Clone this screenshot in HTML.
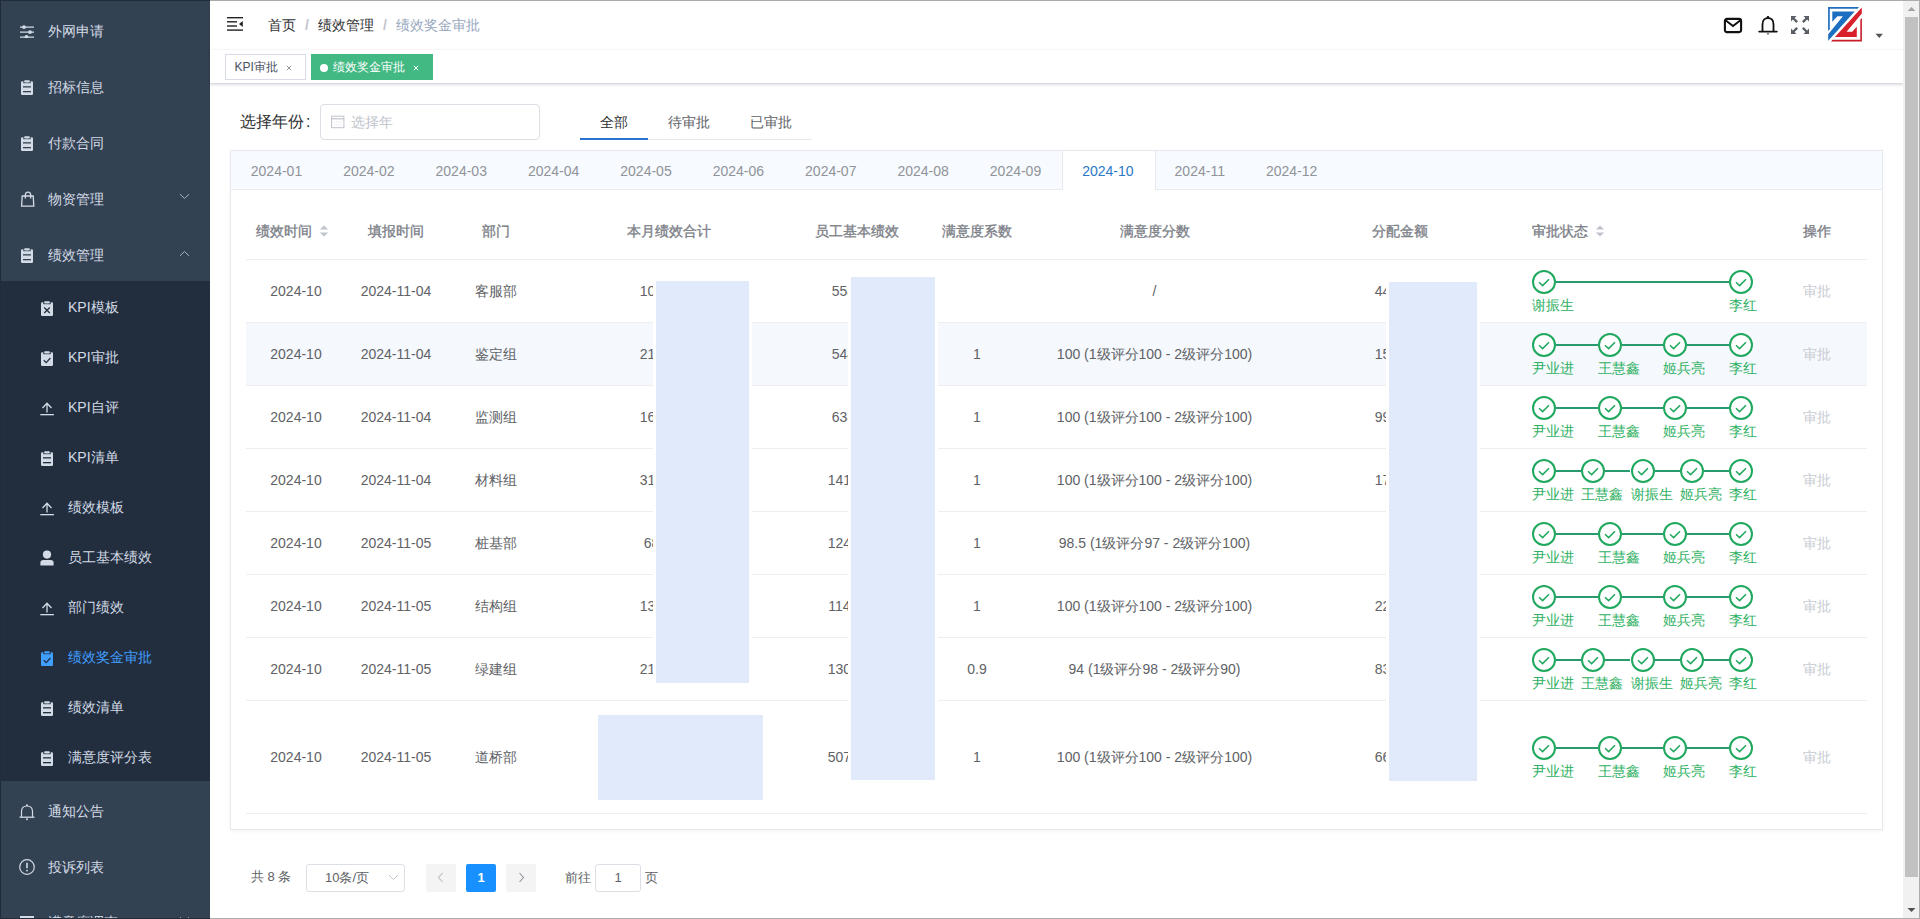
<!DOCTYPE html><html><head><meta charset="utf-8"><style>
*{margin:0;padding:0;box-sizing:border-box}
html,body{width:1920px;height:919px;overflow:hidden;background:#fff;font-family:"Liberation Sans", sans-serif;}
.a{position:absolute}
.t{position:absolute;white-space:nowrap;line-height:20px;}
#side{left:1px;top:1px;width:209px;height:917px;background:#334253;overflow:hidden}
.mi{position:absolute;left:0;width:209px;color:#d3dbe6;font-size:14px;}
.mi .tx{position:absolute;left:47px;line-height:20px;white-space:nowrap}
.smi .tx{left:67px}
.ico{position:absolute}
.row{position:absolute;left:246px;width:1621px;height:63px;border-bottom:1px solid #ebeef5}
.c{position:absolute;font-size:14px;color:#606266;line-height:20px;white-space:nowrap;text-align:center}
.hd{position:absolute;font-size:14px;color:#7d8188;font-weight:normal;-webkit-text-stroke:0.35px #7d8188;line-height:20px;white-space:nowrap}
.red{position:absolute;background:#e0eafb;box-shadow:0 0 0 3px #fff}
.mt{position:absolute;top:152px;height:38px;line-height:38px;font-size:14px;color:#909399;padding:0 20px;white-space:nowrap}
</style></head><body>
<div class="a" style="left:0;top:0;width:210px;height:919px;background:#334253"></div>
<div id="side" class="a">
<div class="a" style="left:0;top:280px;width:209px;height:500px;background:#222e3e"></div>
<div class="mi" style="top:0px;height:56px;"><svg class="ico" style="left:18px;top:23px" width="16" height="14" viewBox="0 0 16 14"><path d="M1 3.1 H15 M1 8.1 H15 M1 13.1 H15" stroke="#d3dbe6" stroke-width="1.3"/><circle cx="5" cy="3.1" r="1.9" fill="#d3dbe6"/><circle cx="11" cy="8.1" r="1.9" fill="#d3dbe6"/><circle cx="7.5" cy="13" r="1.9" fill="#d3dbe6"/></svg><div class="tx" style="top:20px">外网申请</div></div>
<div class="mi" style="top:56px;height:56px;"><svg class="ico" style="left:19px;top:23px" width="14" height="16" viewBox="0 0 14 16"><rect x="1" y="1.2" width="12" height="13.8" rx="1.2" fill="#d3dbe6"/><rect x="3.3" y="0" width="7.4" height="3.2" fill="#334253"/><rect x="4.2" y="0.2" width="5.6" height="2.4" rx="0.8" fill="#d3dbe6"/><rect x="3" y="6.2" width="8" height="1.3" fill="#334253"/><rect x="3" y="11" width="8" height="1.3" fill="#334253"/></svg><div class="tx" style="top:20px">招标信息</div></div>
<div class="mi" style="top:112px;height:56px;"><svg class="ico" style="left:19px;top:23px" width="14" height="16" viewBox="0 0 14 16"><rect x="1" y="1.2" width="12" height="13.8" rx="1.2" fill="#d3dbe6"/><rect x="3.3" y="0" width="7.4" height="3.2" fill="#334253"/><rect x="4.2" y="0.2" width="5.6" height="2.4" rx="0.8" fill="#d3dbe6"/><rect x="3" y="6.2" width="8" height="1.3" fill="#334253"/><rect x="3" y="11" width="8" height="1.3" fill="#334253"/></svg><div class="tx" style="top:20px">付款合同</div></div>
<div class="mi" style="top:168px;height:56px;"><svg class="ico" style="left:19px;top:22px" width="16" height="18" viewBox="0 0 16 18"><path d="M5.3 7.5 V4.2 Q5.3 1.2 8 1.2 Q10.7 1.2 10.7 4.2 V7.5" stroke="#d3dbe6" stroke-width="1.3" fill="none"/><path d="M2.2 5 H13.2 L13.8 15.2 H1.6 Z" stroke="#d3dbe6" stroke-width="1.3" fill="none"/></svg><div class="tx" style="top:20px">物资管理</div><svg class="ico" style="left:178px;top:24px" width="11" height="7" viewBox="0 0 11 7"><path d="M1 1.2 L5.5 5.5 L10 1.2" stroke="#a8b3c2" stroke-width="1" fill="none"/></svg></div>
<div class="mi" style="top:224px;height:56px;"><svg class="ico" style="left:19px;top:23px" width="14" height="16" viewBox="0 0 14 16"><rect x="1" y="1.2" width="12" height="13.8" rx="1.2" fill="#d3dbe6"/><rect x="3.3" y="0" width="7.4" height="3.2" fill="#334253"/><rect x="4.2" y="0.2" width="5.6" height="2.4" rx="0.8" fill="#d3dbe6"/><rect x="3" y="6.2" width="8" height="1.3" fill="#334253"/><rect x="3" y="11" width="8" height="1.3" fill="#334253"/></svg><div class="tx" style="top:20px">绩效管理</div><svg class="ico" style="left:178px;top:25px" width="11" height="7" viewBox="0 0 11 7"><path d="M1 5.8 L5.5 1.5 L10 5.8" stroke="#a8b3c2" stroke-width="1" fill="none"/></svg></div>
<div class="mi smi" style="top:280px;height:50px;color:#d3dbe6"><div class="tx" style="top:16px;left:67px">KPI模板</div><svg class="ico" style="left:39px;top:20px" width="14" height="16" viewBox="0 0 14 16"><rect x="1" y="1.2" width="12" height="13.8" rx="1.2" fill="#d3dbe6"/><rect x="3.3" y="0" width="7.4" height="3.2" fill="#222e3e"/><rect x="4.2" y="0.2" width="5.6" height="2.4" rx="0.8" fill="#d3dbe6"/><path d="M4.2 6.5 L9.8 12 M9.8 6.5 L4.2 12" stroke="#222e3e" stroke-width="1.3"/></svg></div>
<div class="mi smi" style="top:330px;height:50px;color:#d3dbe6"><div class="tx" style="top:16px;left:67px">KPI审批</div><svg class="ico" style="left:39px;top:20px" width="14" height="16" viewBox="0 0 14 16"><rect x="1" y="1.2" width="12" height="13.8" rx="1.2" fill="#d3dbe6"/><rect x="3.3" y="0" width="7.4" height="3.2" fill="#222e3e"/><rect x="4.2" y="0.2" width="5.6" height="2.4" rx="0.8" fill="#d3dbe6"/><path d="M3.8 9.2 L6.2 11.6 L10.4 7" stroke="#222e3e" stroke-width="1.3" fill="none"/></svg></div>
<div class="mi smi" style="top:380px;height:50px;color:#d3dbe6"><div class="tx" style="top:16px;left:67px">KPI自评</div><svg class="ico" style="left:39px;top:21px" width="15" height="15" viewBox="0 0 15 15"><path d="M2.5 6 L7 1.2 L11.5 6 M7 1.5 V10.5" stroke="#d3dbe6" stroke-width="1.3" fill="none"/><rect x="0.3" y="12" width="13.6" height="1.3" fill="#d3dbe6"/></svg></div>
<div class="mi smi" style="top:430px;height:50px;color:#d3dbe6"><div class="tx" style="top:16px;left:67px">KPI清单</div><svg class="ico" style="left:39px;top:20px" width="14" height="16" viewBox="0 0 14 16"><rect x="1" y="1.2" width="12" height="13.8" rx="1.2" fill="#d3dbe6"/><rect x="3.3" y="0" width="7.4" height="3.2" fill="#222e3e"/><rect x="4.2" y="0.2" width="5.6" height="2.4" rx="0.8" fill="#d3dbe6"/><rect x="3" y="6.2" width="8" height="1.3" fill="#222e3e"/><rect x="3" y="11" width="8" height="1.3" fill="#222e3e"/></svg></div>
<div class="mi smi" style="top:480px;height:50px;color:#d3dbe6"><div class="tx" style="top:16px;left:67px">绩效模板</div><svg class="ico" style="left:39px;top:21px" width="15" height="15" viewBox="0 0 15 15"><path d="M2.5 6 L7 1.2 L11.5 6 M7 1.5 V10.5" stroke="#d3dbe6" stroke-width="1.3" fill="none"/><rect x="0.3" y="12" width="13.6" height="1.3" fill="#d3dbe6"/></svg></div>
<div class="mi smi" style="top:530px;height:50px;color:#d3dbe6"><div class="tx" style="top:16px;left:67px">员工基本绩效</div><svg class="ico" style="left:39px;top:19px" width="15" height="17" viewBox="0 0 15 17"><circle cx="7" cy="4.6" r="4.1" fill="#d3dbe6"/><path d="M0.4 15.6 V12.9 Q0.4 10.1 3.4 10.1 H10.6 Q13.6 10.1 13.6 12.9 V15.6 Z" fill="#d3dbe6"/></svg></div>
<div class="mi smi" style="top:580px;height:50px;color:#d3dbe6"><div class="tx" style="top:16px;left:67px">部门绩效</div><svg class="ico" style="left:39px;top:21px" width="15" height="15" viewBox="0 0 15 15"><path d="M2.5 6 L7 1.2 L11.5 6 M7 1.5 V10.5" stroke="#d3dbe6" stroke-width="1.3" fill="none"/><rect x="0.3" y="12" width="13.6" height="1.3" fill="#d3dbe6"/></svg></div>
<div class="mi smi" style="top:630px;height:50px;color:#409eff"><div class="tx" style="top:16px;left:67px">绩效奖金审批</div><svg class="ico" style="left:39px;top:20px" width="14" height="16" viewBox="0 0 14 16"><rect x="1" y="1.2" width="12" height="13.8" rx="1.2" fill="#409eff"/><rect x="3.3" y="0" width="7.4" height="3.2" fill="#222e3e"/><rect x="4.2" y="0.2" width="5.6" height="2.4" rx="0.8" fill="#409eff"/><path d="M3.8 9.2 L6.2 11.6 L10.4 7" stroke="#222e3e" stroke-width="1.3" fill="none"/></svg></div>
<div class="mi smi" style="top:680px;height:50px;color:#d3dbe6"><div class="tx" style="top:16px;left:67px">绩效清单</div><svg class="ico" style="left:39px;top:20px" width="14" height="16" viewBox="0 0 14 16"><rect x="1" y="1.2" width="12" height="13.8" rx="1.2" fill="#d3dbe6"/><rect x="3.3" y="0" width="7.4" height="3.2" fill="#222e3e"/><rect x="4.2" y="0.2" width="5.6" height="2.4" rx="0.8" fill="#d3dbe6"/><rect x="3" y="6.2" width="8" height="1.3" fill="#222e3e"/><rect x="3" y="11" width="8" height="1.3" fill="#222e3e"/></svg></div>
<div class="mi smi" style="top:730px;height:50px;color:#d3dbe6"><div class="tx" style="top:16px;left:67px">满意度评分表</div><svg class="ico" style="left:39px;top:20px" width="14" height="16" viewBox="0 0 14 16"><rect x="1" y="1.2" width="12" height="13.8" rx="1.2" fill="#d3dbe6"/><rect x="3.3" y="0" width="7.4" height="3.2" fill="#222e3e"/><rect x="4.2" y="0.2" width="5.6" height="2.4" rx="0.8" fill="#d3dbe6"/><rect x="3" y="6.2" width="8" height="1.3" fill="#222e3e"/><rect x="3" y="11" width="8" height="1.3" fill="#222e3e"/></svg></div>
<div class="mi" style="top:780px;height:56px;"><svg class="ico" style="left:17px;top:22px" width="18" height="18" viewBox="0 0 18 18"><path d="M3.5 14 V8.5 Q3.5 3 9 3 Q14.5 3 14.5 8.5 V14" stroke="#d3dbe6" stroke-width="1.2" fill="none"/><path d="M1.5 14.2 H16.5" stroke="#d3dbe6" stroke-width="1.3"/><circle cx="9" cy="2.2" r="1" fill="#d3dbe6"/><circle cx="9" cy="16.2" r="1" fill="#d3dbe6"/></svg><div class="tx" style="top:20px">通知公告</div></div>
<div class="mi" style="top:836px;height:56px;"><svg class="ico" style="left:17px;top:21px" width="18" height="18" viewBox="0 0 18 18"><circle cx="9" cy="9" r="7.3" stroke="#d3dbe6" stroke-width="1.2" fill="none"/><path d="M9 4.8 V10.2" stroke="#d3dbe6" stroke-width="1.6"/><circle cx="9" cy="12.6" r="0.95" fill="#d3dbe6"/></svg><div class="tx" style="top:20px">投诉列表</div></div>
<div class="mi" style="top:891px;height:56px;"><svg class="ico" style="left:19px;top:24px" width="14" height="14" viewBox="0 0 14 14"><rect x="0" y="0" width="14" height="14" fill="#d3dbe6"/></svg><div class="tx" style="top:20px">满意度调查</div><svg class="ico" style="left:178px;top:24px" width="11" height="7" viewBox="0 0 11 7"><path d="M1 1.2 L5.5 5.5 L10 1.2" stroke="#a8b3c2" stroke-width="1" fill="none"/></svg></div>
</div>
<div class="a" style="left:210px;top:1px;width:1693px;height:49px;background:#fff;box-shadow:0 1px 4px rgba(0,21,41,.08)"></div>
<svg class="a" style="left:227px;top:17px" width="17" height="14" viewBox="0 0 17 14"><rect x="0" y="0" width="16" height="1.4" fill="#222"/><rect x="0" y="4.1" width="10" height="1.4" fill="#222"/><rect x="0" y="8.3" width="10" height="1.4" fill="#222"/><rect x="0" y="12.4" width="16" height="1.4" fill="#222"/><path d="M15.8 3.9 L12 6.9 L15.8 9.9 Z" fill="#222"/></svg>
<div class="t" style="left:268px;top:15px;font-size:14px;color:#303133">首页</div>
<div class="t" style="left:305px;top:15px;font-size:14px;color:#c0c4cc;font-weight:bold">/</div>
<div class="t" style="left:318px;top:15px;font-size:14px;color:#303133">绩效管理</div>
<div class="t" style="left:383px;top:15px;font-size:14px;color:#c0c4cc;font-weight:bold">/</div>
<div class="t" style="left:396px;top:15px;font-size:14px;color:#97a8be">绩效奖金审批</div>
<svg class="a" style="left:1723px;top:17px" width="20" height="17" viewBox="0 0 20 17"><rect x="1.9" y="1.9" width="16.2" height="13.2" rx="2" stroke="#111" stroke-width="2.1" fill="none"/><path d="M2.5 3.2 L10 9 L17.5 3.2" stroke="#111" stroke-width="2" fill="none"/></svg>
<svg class="a" style="left:1758px;top:15px" width="20" height="21" viewBox="0 0 20 21"><path d="M4.5 16 V9.5 Q4.5 3.2 10 3.2 Q15.5 3.2 15.5 9.5 V16" stroke="#111" stroke-width="1.8" fill="none"/><path d="M1.2 16.6 H18.8" stroke="#111" stroke-width="1.9" stroke-linecap="round"/><circle cx="10" cy="2.3" r="1.3" fill="#111"/><path d="M8.6 18.6 H11.4 L10 19.8 Z" fill="#111"/></svg>
<svg class="a" style="left:1790px;top:15px" width="20" height="20" viewBox="0 0 20 20"><g fill="#5a5e66"><path d="M1 1 H6.5 L4.6 2.9 L8 6.3 L6.3 8 L2.9 4.6 L1 6.5 Z"/><path d="M19 1 H13.5 L15.4 2.9 L12 6.3 L13.7 8 L17.1 4.6 L19 6.5 Z"/><path d="M1 19 H6.5 L4.6 17.1 L8 13.7 L6.3 12 L2.9 15.4 L1 13.5 Z"/><path d="M19 19 H13.5 L15.4 17.1 L12 13.7 L13.7 12 L17.1 15.4 L19 13.5 Z"/></g></svg>
<svg class="a" style="left:1824px;top:3px" width="42" height="42" viewBox="0 0 42 42"><path d="M4.1 4 H35 L33.4 5.7 H5.8 V26.2 L4.1 28 Z" fill="#1f6fbf"/><path d="M8.3 8.6 H30.7 L4.2 37.8 V31.2 L18.9 13.3 H13.4 L8.3 18.8 Z" fill="#1c6fc0"/><path d="M37.8 4.4 V10.5 L22.6 28.7 H28.2 L32.8 23.8 V33.9 H11 Z" fill="#d7202b"/><path d="M37.9 15 V38.6 H7 L8.6 36.7 H36.3 V16.7 Z" fill="#c81d27"/></svg>
<svg class="a" style="left:1875px;top:33px" width="9" height="6" viewBox="0 0 9 6"><path d="M0.5 0.8 H8 L4.25 4.9 Z" fill="#555"/></svg>
<div class="a" style="left:210px;top:50px;width:1693px;height:34px;background:#fff;border-bottom:1px solid #d8dce5;box-shadow:0 1px 3px 0 rgba(0,0,0,.12),0 0 3px 0 rgba(0,0,0,.04)"></div>
<div class="a" style="left:225px;top:54px;width:81px;height:26px;border:1px solid #d8dce5;background:#fff"></div>
<div class="t" style="left:234.5px;top:57px;font-size:12px;color:#495060">KPI审批</div>
<svg class="a" style="left:286px;top:65px" width="6" height="6" viewBox="0 0 6 6"><path d="M0.8 0.8 L5.2 5.2 M5.2 0.8 L0.8 5.2" stroke="#888" stroke-width="0.9"/></svg>
<div class="a" style="left:311px;top:54px;width:122px;height:26px;background:#42b983"></div>
<div class="a" style="left:320px;top:64px;width:8px;height:8px;border-radius:50%;background:#fff"></div>
<div class="t" style="left:333px;top:57px;font-size:12px;color:#fff">绩效奖金审批</div>
<svg class="a" style="left:413px;top:65px" width="6" height="6" viewBox="0 0 6 6"><path d="M0.8 0.8 L5.2 5.2 M5.2 0.8 L0.8 5.2" stroke="#fff" stroke-width="1"/></svg>
<div class="t" style="left:240px;top:112px;font-size:16px;color:#303133">选择年份<span style="margin-left:2px">:</span></div>
<div class="a" style="left:320px;top:104px;width:220px;height:36px;border:1px solid #dcdfe6;border-radius:4px;background:#fff"></div>
<svg class="a" style="left:331px;top:115px" width="14" height="14" viewBox="0 0 14 14"><rect x="0.6" y="1.2" width="12.3" height="11.5" stroke="#c0c4cc" stroke-width="1" fill="none"/><path d="M0.6 3.8 H12.9" stroke="#c0c4cc" stroke-width="1.2"/><path d="M3 7 H11 M3 9.8 H11" stroke="#dde0e6" stroke-width="0.8" stroke-dasharray="1.2 1"/></svg>
<div class="t" style="left:351px;top:112px;font-size:14px;color:#c0c4cc">选择年</div>
<div class="a" style="left:580px;top:139px;width:232px;height:1px;background:#e4e7ed"></div>
<div class="a" style="left:580px;top:138px;width:68px;height:2px;background:#2a72d0"></div>
<div class="t" style="left:600px;top:112px;font-size:14px;color:#303133">全部</div>
<div class="t" style="left:668px;top:112px;font-size:14px;color:#606266">待审批</div>
<div class="t" style="left:750px;top:112px;font-size:14px;color:#606266">已审批</div>
<div class="a" style="left:230px;top:150px;width:1653px;height:680px;border:1px solid #e6e8eb;background:#fff;box-shadow:0 2px 4px 0 rgba(0,0,0,.04)"></div>
<div class="a" style="left:231px;top:151px;width:1651px;height:39px;background:#f7fafe;border-bottom:1px solid #e9ecf0"></div>
<div class="mt" style="left:230.80px">2024-01</div>
<div class="mt" style="left:323.18px">2024-02</div>
<div class="mt" style="left:415.56px">2024-03</div>
<div class="mt" style="left:507.93px">2024-04</div>
<div class="mt" style="left:600.31px">2024-05</div>
<div class="mt" style="left:692.69px">2024-06</div>
<div class="mt" style="left:785.07px">2024-07</div>
<div class="mt" style="left:877.45px">2024-08</div>
<div class="mt" style="left:969.82px">2024-09</div>
<div class="a" style="left:1062.40px;top:151px;width:93.38px;height:39px;background:#fff;border-left:1px solid #e6e8eb;border-right:1px solid #e6e8eb"></div>
<div class="mt" style="left:1062.20px;color:#2a78c8">2024-10</div>
<div class="mt" style="left:1154.58px">2024-11</div>
<div class="mt" style="left:1245.92px">2024-12</div>
<div class="a" style="left:246px;top:259px;width:1621px;height:1px;background:#eceef2"></div>
<div class="hd" style="left:256px;top:221px">绩效时间</div>
<svg class="a" style="left:319px;top:225px" width="10" height="12" viewBox="0 0 10 12"><path d="M5 0.5 L9.2 4.6 H0.8 Z M5 11.5 L9.2 7.4 H0.8 Z" fill="#c0c4cc"/></svg>
<div class="hd" style="left:368.0px;top:221px">填报时间</div>
<div class="hd" style="left:482.0px;top:221px">部门</div>
<div class="hd" style="left:627.0px;top:221px">本月绩效合计</div>
<div class="hd" style="left:815.0px;top:221px">员工基本绩效</div>
<div class="hd" style="left:942.0px;top:221px">满意度系数</div>
<div class="hd" style="left:1119.5px;top:221px">满意度分数</div>
<div class="hd" style="left:1372.0px;top:221px">分配金额</div>
<div class="hd" style="left:1532px;top:221px">审批状态</div>
<svg class="a" style="left:1595px;top:225px" width="10" height="12" viewBox="0 0 10 12"><path d="M5 0.5 L9.2 4.6 H0.8 Z M5 11.5 L9.2 7.4 H0.8 Z" fill="#c0c4cc"/></svg>
<div class="hd" style="left:1803.0px;top:221px">操作</div>
<div class="a" style="left:246px;top:260px;width:1621px;height:62px;background:#fff"></div>
<div class="a" style="left:246px;top:322px;width:1621px;height:1px;background:#eceef2"></div>
<div class="c" style="left:246px;width:100px;top:281.0px">2024-10</div>
<div class="c" style="left:346px;width:100px;top:281.0px">2024-11-04</div>
<div class="c" style="left:446px;width:100px;top:281.0px">客服部</div>
<div class="c" style="left:546px;width:246px;top:281.0px">10888.88</div>
<div class="c" style="left:792px;width:130px;top:281.0px">5588.88</div>
<div class="c" style="left:1032px;width:245px;top:281.0px">/</div>
<div class="c" style="left:1277px;width:246px;top:281.0px">4488.88</div>
<div class="c" style="left:1767px;width:100px;top:281.0px;color:#c8ccd3">审批</div>
<div class="a" style="left:1556.0px;top:280.5px;width:173.0px;height:2px;background:#2a9a6e"></div>
<div class="a" style="left:1532.0px;top:269.5px;width:24px;height:24px"><svg class="a" style="left:0;top:0" width="24" height="24" viewBox="0 0 24 24"><circle cx="12" cy="12" r="11" stroke="#1fa85e" stroke-width="2" fill="#fff"/><path d="M7 12.3 L10.6 15.6 L17 9.2" stroke="#1fa85e" stroke-width="1.5" fill="none"/></svg></div>
<div class="t" style="left:1532.0px;top:295.0px;font-size:14px;color:#2db061">谢振生</div>
<div class="a" style="left:1729.0px;top:269.5px;width:24px;height:24px"><svg class="a" style="left:0;top:0" width="24" height="24" viewBox="0 0 24 24"><circle cx="12" cy="12" r="11" stroke="#1fa85e" stroke-width="2" fill="#fff"/><path d="M7 12.3 L10.6 15.6 L17 9.2" stroke="#1fa85e" stroke-width="1.5" fill="none"/></svg></div>
<div class="t" style="left:1729.0px;top:295.0px;font-size:14px;color:#2db061">李红</div>
<div class="a" style="left:246px;top:323px;width:1621px;height:62px;background:#f5f8fd"></div>
<div class="a" style="left:246px;top:385px;width:1621px;height:1px;background:#eceef2"></div>
<div class="c" style="left:246px;width:100px;top:344.0px">2024-10</div>
<div class="c" style="left:346px;width:100px;top:344.0px">2024-11-04</div>
<div class="c" style="left:446px;width:100px;top:344.0px">鉴定组</div>
<div class="c" style="left:546px;width:246px;top:344.0px">21888.88</div>
<div class="c" style="left:792px;width:130px;top:344.0px">5488.88</div>
<div class="c" style="left:922px;width:110px;top:344.0px">1</div>
<div class="c" style="left:1032px;width:245px;top:344.0px">100 (1级评分100 - 2级评分100)</div>
<div class="c" style="left:1277px;width:246px;top:344.0px">1588.88</div>
<div class="c" style="left:1767px;width:100px;top:344.0px;color:#c8ccd3">审批</div>
<div class="a" style="left:1556.0px;top:343.5px;width:41.7px;height:2px;background:#2a9a6e"></div>
<div class="a" style="left:1532.0px;top:332.5px;width:24px;height:24px"><svg class="a" style="left:0;top:0" width="24" height="24" viewBox="0 0 24 24"><circle cx="12" cy="12" r="11" stroke="#1fa85e" stroke-width="2" fill="#fff"/><path d="M7 12.3 L10.6 15.6 L17 9.2" stroke="#1fa85e" stroke-width="1.5" fill="none"/></svg></div>
<div class="t" style="left:1532.0px;top:358.0px;font-size:14px;color:#2db061">尹业进</div>
<div class="a" style="left:1621.7px;top:343.5px;width:41.7px;height:2px;background:#2a9a6e"></div>
<div class="a" style="left:1597.7px;top:332.5px;width:24px;height:24px"><svg class="a" style="left:0;top:0" width="24" height="24" viewBox="0 0 24 24"><circle cx="12" cy="12" r="11" stroke="#1fa85e" stroke-width="2" fill="#fff"/><path d="M7 12.3 L10.6 15.6 L17 9.2" stroke="#1fa85e" stroke-width="1.5" fill="none"/></svg></div>
<div class="t" style="left:1597.7px;top:358.0px;font-size:14px;color:#2db061">王慧鑫</div>
<div class="a" style="left:1687.3px;top:343.5px;width:41.7px;height:2px;background:#2a9a6e"></div>
<div class="a" style="left:1663.3px;top:332.5px;width:24px;height:24px"><svg class="a" style="left:0;top:0" width="24" height="24" viewBox="0 0 24 24"><circle cx="12" cy="12" r="11" stroke="#1fa85e" stroke-width="2" fill="#fff"/><path d="M7 12.3 L10.6 15.6 L17 9.2" stroke="#1fa85e" stroke-width="1.5" fill="none"/></svg></div>
<div class="t" style="left:1663.3px;top:358.0px;font-size:14px;color:#2db061">姬兵亮</div>
<div class="a" style="left:1729.0px;top:332.5px;width:24px;height:24px"><svg class="a" style="left:0;top:0" width="24" height="24" viewBox="0 0 24 24"><circle cx="12" cy="12" r="11" stroke="#1fa85e" stroke-width="2" fill="#fff"/><path d="M7 12.3 L10.6 15.6 L17 9.2" stroke="#1fa85e" stroke-width="1.5" fill="none"/></svg></div>
<div class="t" style="left:1729.0px;top:358.0px;font-size:14px;color:#2db061">李红</div>
<div class="a" style="left:246px;top:386px;width:1621px;height:62px;background:#fff"></div>
<div class="a" style="left:246px;top:448px;width:1621px;height:1px;background:#eceef2"></div>
<div class="c" style="left:246px;width:100px;top:407.0px">2024-10</div>
<div class="c" style="left:346px;width:100px;top:407.0px">2024-11-04</div>
<div class="c" style="left:446px;width:100px;top:407.0px">监测组</div>
<div class="c" style="left:546px;width:246px;top:407.0px">16888.88</div>
<div class="c" style="left:792px;width:130px;top:407.0px">6388.88</div>
<div class="c" style="left:922px;width:110px;top:407.0px">1</div>
<div class="c" style="left:1032px;width:245px;top:407.0px">100 (1级评分100 - 2级评分100)</div>
<div class="c" style="left:1277px;width:246px;top:407.0px">9988.88</div>
<div class="c" style="left:1767px;width:100px;top:407.0px;color:#c8ccd3">审批</div>
<div class="a" style="left:1556.0px;top:406.5px;width:41.7px;height:2px;background:#2a9a6e"></div>
<div class="a" style="left:1532.0px;top:395.5px;width:24px;height:24px"><svg class="a" style="left:0;top:0" width="24" height="24" viewBox="0 0 24 24"><circle cx="12" cy="12" r="11" stroke="#1fa85e" stroke-width="2" fill="#fff"/><path d="M7 12.3 L10.6 15.6 L17 9.2" stroke="#1fa85e" stroke-width="1.5" fill="none"/></svg></div>
<div class="t" style="left:1532.0px;top:421.0px;font-size:14px;color:#2db061">尹业进</div>
<div class="a" style="left:1621.7px;top:406.5px;width:41.7px;height:2px;background:#2a9a6e"></div>
<div class="a" style="left:1597.7px;top:395.5px;width:24px;height:24px"><svg class="a" style="left:0;top:0" width="24" height="24" viewBox="0 0 24 24"><circle cx="12" cy="12" r="11" stroke="#1fa85e" stroke-width="2" fill="#fff"/><path d="M7 12.3 L10.6 15.6 L17 9.2" stroke="#1fa85e" stroke-width="1.5" fill="none"/></svg></div>
<div class="t" style="left:1597.7px;top:421.0px;font-size:14px;color:#2db061">王慧鑫</div>
<div class="a" style="left:1687.3px;top:406.5px;width:41.7px;height:2px;background:#2a9a6e"></div>
<div class="a" style="left:1663.3px;top:395.5px;width:24px;height:24px"><svg class="a" style="left:0;top:0" width="24" height="24" viewBox="0 0 24 24"><circle cx="12" cy="12" r="11" stroke="#1fa85e" stroke-width="2" fill="#fff"/><path d="M7 12.3 L10.6 15.6 L17 9.2" stroke="#1fa85e" stroke-width="1.5" fill="none"/></svg></div>
<div class="t" style="left:1663.3px;top:421.0px;font-size:14px;color:#2db061">姬兵亮</div>
<div class="a" style="left:1729.0px;top:395.5px;width:24px;height:24px"><svg class="a" style="left:0;top:0" width="24" height="24" viewBox="0 0 24 24"><circle cx="12" cy="12" r="11" stroke="#1fa85e" stroke-width="2" fill="#fff"/><path d="M7 12.3 L10.6 15.6 L17 9.2" stroke="#1fa85e" stroke-width="1.5" fill="none"/></svg></div>
<div class="t" style="left:1729.0px;top:421.0px;font-size:14px;color:#2db061">李红</div>
<div class="a" style="left:246px;top:449px;width:1621px;height:62px;background:#fff"></div>
<div class="a" style="left:246px;top:511px;width:1621px;height:1px;background:#eceef2"></div>
<div class="c" style="left:246px;width:100px;top:470.0px">2024-10</div>
<div class="c" style="left:346px;width:100px;top:470.0px">2024-11-04</div>
<div class="c" style="left:446px;width:100px;top:470.0px">材料组</div>
<div class="c" style="left:546px;width:246px;top:470.0px">31888.88</div>
<div class="c" style="left:792px;width:130px;top:470.0px">14188.88</div>
<div class="c" style="left:922px;width:110px;top:470.0px">1</div>
<div class="c" style="left:1032px;width:245px;top:470.0px">100 (1级评分100 - 2级评分100)</div>
<div class="c" style="left:1277px;width:246px;top:470.0px">1788.88</div>
<div class="c" style="left:1767px;width:100px;top:470.0px;color:#c8ccd3">审批</div>
<div class="a" style="left:1556.0px;top:469.5px;width:25.2px;height:2px;background:#2a9a6e"></div>
<div class="a" style="left:1532.0px;top:458.5px;width:24px;height:24px"><svg class="a" style="left:0;top:0" width="24" height="24" viewBox="0 0 24 24"><circle cx="12" cy="12" r="11" stroke="#1fa85e" stroke-width="2" fill="#fff"/><path d="M7 12.3 L10.6 15.6 L17 9.2" stroke="#1fa85e" stroke-width="1.5" fill="none"/></svg></div>
<div class="t" style="left:1532.0px;top:484.0px;font-size:14px;color:#2db061">尹业进</div>
<div class="a" style="left:1605.2px;top:469.5px;width:25.2px;height:2px;background:#2a9a6e"></div>
<div class="a" style="left:1581.2px;top:458.5px;width:24px;height:24px"><svg class="a" style="left:0;top:0" width="24" height="24" viewBox="0 0 24 24"><circle cx="12" cy="12" r="11" stroke="#1fa85e" stroke-width="2" fill="#fff"/><path d="M7 12.3 L10.6 15.6 L17 9.2" stroke="#1fa85e" stroke-width="1.5" fill="none"/></svg></div>
<div class="t" style="left:1581.2px;top:484.0px;font-size:14px;color:#2db061">王慧鑫</div>
<div class="a" style="left:1654.5px;top:469.5px;width:25.2px;height:2px;background:#2a9a6e"></div>
<div class="a" style="left:1630.5px;top:458.5px;width:24px;height:24px"><svg class="a" style="left:0;top:0" width="24" height="24" viewBox="0 0 24 24"><circle cx="12" cy="12" r="11" stroke="#1fa85e" stroke-width="2" fill="#fff"/><path d="M7 12.3 L10.6 15.6 L17 9.2" stroke="#1fa85e" stroke-width="1.5" fill="none"/></svg></div>
<div class="t" style="left:1630.5px;top:484.0px;font-size:14px;color:#2db061">谢振生</div>
<div class="a" style="left:1703.8px;top:469.5px;width:25.2px;height:2px;background:#2a9a6e"></div>
<div class="a" style="left:1679.8px;top:458.5px;width:24px;height:24px"><svg class="a" style="left:0;top:0" width="24" height="24" viewBox="0 0 24 24"><circle cx="12" cy="12" r="11" stroke="#1fa85e" stroke-width="2" fill="#fff"/><path d="M7 12.3 L10.6 15.6 L17 9.2" stroke="#1fa85e" stroke-width="1.5" fill="none"/></svg></div>
<div class="t" style="left:1679.8px;top:484.0px;font-size:14px;color:#2db061">姬兵亮</div>
<div class="a" style="left:1729.0px;top:458.5px;width:24px;height:24px"><svg class="a" style="left:0;top:0" width="24" height="24" viewBox="0 0 24 24"><circle cx="12" cy="12" r="11" stroke="#1fa85e" stroke-width="2" fill="#fff"/><path d="M7 12.3 L10.6 15.6 L17 9.2" stroke="#1fa85e" stroke-width="1.5" fill="none"/></svg></div>
<div class="t" style="left:1729.0px;top:484.0px;font-size:14px;color:#2db061">李红</div>
<div class="a" style="left:246px;top:512px;width:1621px;height:62px;background:#fff"></div>
<div class="a" style="left:246px;top:574px;width:1621px;height:1px;background:#eceef2"></div>
<div class="c" style="left:246px;width:100px;top:533.0px">2024-10</div>
<div class="c" style="left:346px;width:100px;top:533.0px">2024-11-05</div>
<div class="c" style="left:446px;width:100px;top:533.0px">桩基部</div>
<div class="c" style="left:546px;width:246px;top:533.0px">6888.88</div>
<div class="c" style="left:792px;width:130px;top:533.0px">12488.88</div>
<div class="c" style="left:922px;width:110px;top:533.0px">1</div>
<div class="c" style="left:1032px;width:245px;top:533.0px">98.5 (1级评分97 - 2级评分100)</div>
<div class="c" style="left:1767px;width:100px;top:533.0px;color:#c8ccd3">审批</div>
<div class="a" style="left:1556.0px;top:532.5px;width:41.7px;height:2px;background:#2a9a6e"></div>
<div class="a" style="left:1532.0px;top:521.5px;width:24px;height:24px"><svg class="a" style="left:0;top:0" width="24" height="24" viewBox="0 0 24 24"><circle cx="12" cy="12" r="11" stroke="#1fa85e" stroke-width="2" fill="#fff"/><path d="M7 12.3 L10.6 15.6 L17 9.2" stroke="#1fa85e" stroke-width="1.5" fill="none"/></svg></div>
<div class="t" style="left:1532.0px;top:547.0px;font-size:14px;color:#2db061">尹业进</div>
<div class="a" style="left:1621.7px;top:532.5px;width:41.7px;height:2px;background:#2a9a6e"></div>
<div class="a" style="left:1597.7px;top:521.5px;width:24px;height:24px"><svg class="a" style="left:0;top:0" width="24" height="24" viewBox="0 0 24 24"><circle cx="12" cy="12" r="11" stroke="#1fa85e" stroke-width="2" fill="#fff"/><path d="M7 12.3 L10.6 15.6 L17 9.2" stroke="#1fa85e" stroke-width="1.5" fill="none"/></svg></div>
<div class="t" style="left:1597.7px;top:547.0px;font-size:14px;color:#2db061">王慧鑫</div>
<div class="a" style="left:1687.3px;top:532.5px;width:41.7px;height:2px;background:#2a9a6e"></div>
<div class="a" style="left:1663.3px;top:521.5px;width:24px;height:24px"><svg class="a" style="left:0;top:0" width="24" height="24" viewBox="0 0 24 24"><circle cx="12" cy="12" r="11" stroke="#1fa85e" stroke-width="2" fill="#fff"/><path d="M7 12.3 L10.6 15.6 L17 9.2" stroke="#1fa85e" stroke-width="1.5" fill="none"/></svg></div>
<div class="t" style="left:1663.3px;top:547.0px;font-size:14px;color:#2db061">姬兵亮</div>
<div class="a" style="left:1729.0px;top:521.5px;width:24px;height:24px"><svg class="a" style="left:0;top:0" width="24" height="24" viewBox="0 0 24 24"><circle cx="12" cy="12" r="11" stroke="#1fa85e" stroke-width="2" fill="#fff"/><path d="M7 12.3 L10.6 15.6 L17 9.2" stroke="#1fa85e" stroke-width="1.5" fill="none"/></svg></div>
<div class="t" style="left:1729.0px;top:547.0px;font-size:14px;color:#2db061">李红</div>
<div class="a" style="left:246px;top:575px;width:1621px;height:62px;background:#fff"></div>
<div class="a" style="left:246px;top:637px;width:1621px;height:1px;background:#eceef2"></div>
<div class="c" style="left:246px;width:100px;top:596.0px">2024-10</div>
<div class="c" style="left:346px;width:100px;top:596.0px">2024-11-05</div>
<div class="c" style="left:446px;width:100px;top:596.0px">结构组</div>
<div class="c" style="left:546px;width:246px;top:596.0px">13888.88</div>
<div class="c" style="left:792px;width:130px;top:596.0px">11488.88</div>
<div class="c" style="left:922px;width:110px;top:596.0px">1</div>
<div class="c" style="left:1032px;width:245px;top:596.0px">100 (1级评分100 - 2级评分100)</div>
<div class="c" style="left:1277px;width:246px;top:596.0px">2288.88</div>
<div class="c" style="left:1767px;width:100px;top:596.0px;color:#c8ccd3">审批</div>
<div class="a" style="left:1556.0px;top:595.5px;width:41.7px;height:2px;background:#2a9a6e"></div>
<div class="a" style="left:1532.0px;top:584.5px;width:24px;height:24px"><svg class="a" style="left:0;top:0" width="24" height="24" viewBox="0 0 24 24"><circle cx="12" cy="12" r="11" stroke="#1fa85e" stroke-width="2" fill="#fff"/><path d="M7 12.3 L10.6 15.6 L17 9.2" stroke="#1fa85e" stroke-width="1.5" fill="none"/></svg></div>
<div class="t" style="left:1532.0px;top:610.0px;font-size:14px;color:#2db061">尹业进</div>
<div class="a" style="left:1621.7px;top:595.5px;width:41.7px;height:2px;background:#2a9a6e"></div>
<div class="a" style="left:1597.7px;top:584.5px;width:24px;height:24px"><svg class="a" style="left:0;top:0" width="24" height="24" viewBox="0 0 24 24"><circle cx="12" cy="12" r="11" stroke="#1fa85e" stroke-width="2" fill="#fff"/><path d="M7 12.3 L10.6 15.6 L17 9.2" stroke="#1fa85e" stroke-width="1.5" fill="none"/></svg></div>
<div class="t" style="left:1597.7px;top:610.0px;font-size:14px;color:#2db061">王慧鑫</div>
<div class="a" style="left:1687.3px;top:595.5px;width:41.7px;height:2px;background:#2a9a6e"></div>
<div class="a" style="left:1663.3px;top:584.5px;width:24px;height:24px"><svg class="a" style="left:0;top:0" width="24" height="24" viewBox="0 0 24 24"><circle cx="12" cy="12" r="11" stroke="#1fa85e" stroke-width="2" fill="#fff"/><path d="M7 12.3 L10.6 15.6 L17 9.2" stroke="#1fa85e" stroke-width="1.5" fill="none"/></svg></div>
<div class="t" style="left:1663.3px;top:610.0px;font-size:14px;color:#2db061">姬兵亮</div>
<div class="a" style="left:1729.0px;top:584.5px;width:24px;height:24px"><svg class="a" style="left:0;top:0" width="24" height="24" viewBox="0 0 24 24"><circle cx="12" cy="12" r="11" stroke="#1fa85e" stroke-width="2" fill="#fff"/><path d="M7 12.3 L10.6 15.6 L17 9.2" stroke="#1fa85e" stroke-width="1.5" fill="none"/></svg></div>
<div class="t" style="left:1729.0px;top:610.0px;font-size:14px;color:#2db061">李红</div>
<div class="a" style="left:246px;top:638px;width:1621px;height:62px;background:#fff"></div>
<div class="a" style="left:246px;top:700px;width:1621px;height:1px;background:#eceef2"></div>
<div class="c" style="left:246px;width:100px;top:659.0px">2024-10</div>
<div class="c" style="left:346px;width:100px;top:659.0px">2024-11-05</div>
<div class="c" style="left:446px;width:100px;top:659.0px">绿建组</div>
<div class="c" style="left:546px;width:246px;top:659.0px">21888.88</div>
<div class="c" style="left:792px;width:130px;top:659.0px">13088.88</div>
<div class="c" style="left:922px;width:110px;top:659.0px">0.9</div>
<div class="c" style="left:1032px;width:245px;top:659.0px">94 (1级评分98 - 2级评分90)</div>
<div class="c" style="left:1277px;width:246px;top:659.0px">8388.88</div>
<div class="c" style="left:1767px;width:100px;top:659.0px;color:#c8ccd3">审批</div>
<div class="a" style="left:1556.0px;top:658.5px;width:25.2px;height:2px;background:#2a9a6e"></div>
<div class="a" style="left:1532.0px;top:647.5px;width:24px;height:24px"><svg class="a" style="left:0;top:0" width="24" height="24" viewBox="0 0 24 24"><circle cx="12" cy="12" r="11" stroke="#1fa85e" stroke-width="2" fill="#fff"/><path d="M7 12.3 L10.6 15.6 L17 9.2" stroke="#1fa85e" stroke-width="1.5" fill="none"/></svg></div>
<div class="t" style="left:1532.0px;top:673.0px;font-size:14px;color:#2db061">尹业进</div>
<div class="a" style="left:1605.2px;top:658.5px;width:25.2px;height:2px;background:#2a9a6e"></div>
<div class="a" style="left:1581.2px;top:647.5px;width:24px;height:24px"><svg class="a" style="left:0;top:0" width="24" height="24" viewBox="0 0 24 24"><circle cx="12" cy="12" r="11" stroke="#1fa85e" stroke-width="2" fill="#fff"/><path d="M7 12.3 L10.6 15.6 L17 9.2" stroke="#1fa85e" stroke-width="1.5" fill="none"/></svg></div>
<div class="t" style="left:1581.2px;top:673.0px;font-size:14px;color:#2db061">王慧鑫</div>
<div class="a" style="left:1654.5px;top:658.5px;width:25.2px;height:2px;background:#2a9a6e"></div>
<div class="a" style="left:1630.5px;top:647.5px;width:24px;height:24px"><svg class="a" style="left:0;top:0" width="24" height="24" viewBox="0 0 24 24"><circle cx="12" cy="12" r="11" stroke="#1fa85e" stroke-width="2" fill="#fff"/><path d="M7 12.3 L10.6 15.6 L17 9.2" stroke="#1fa85e" stroke-width="1.5" fill="none"/></svg></div>
<div class="t" style="left:1630.5px;top:673.0px;font-size:14px;color:#2db061">谢振生</div>
<div class="a" style="left:1703.8px;top:658.5px;width:25.2px;height:2px;background:#2a9a6e"></div>
<div class="a" style="left:1679.8px;top:647.5px;width:24px;height:24px"><svg class="a" style="left:0;top:0" width="24" height="24" viewBox="0 0 24 24"><circle cx="12" cy="12" r="11" stroke="#1fa85e" stroke-width="2" fill="#fff"/><path d="M7 12.3 L10.6 15.6 L17 9.2" stroke="#1fa85e" stroke-width="1.5" fill="none"/></svg></div>
<div class="t" style="left:1679.8px;top:673.0px;font-size:14px;color:#2db061">姬兵亮</div>
<div class="a" style="left:1729.0px;top:647.5px;width:24px;height:24px"><svg class="a" style="left:0;top:0" width="24" height="24" viewBox="0 0 24 24"><circle cx="12" cy="12" r="11" stroke="#1fa85e" stroke-width="2" fill="#fff"/><path d="M7 12.3 L10.6 15.6 L17 9.2" stroke="#1fa85e" stroke-width="1.5" fill="none"/></svg></div>
<div class="t" style="left:1729.0px;top:673.0px;font-size:14px;color:#2db061">李红</div>
<div class="a" style="left:246px;top:701px;width:1621px;height:112px;background:#fff"></div>
<div class="a" style="left:246px;top:813px;width:1621px;height:1px;background:#eceef2"></div>
<div class="c" style="left:246px;width:100px;top:747.0px">2024-10</div>
<div class="c" style="left:346px;width:100px;top:747.0px">2024-11-05</div>
<div class="c" style="left:446px;width:100px;top:747.0px">道桥部</div>
<div class="c" style="left:792px;width:130px;top:747.0px">50788.88</div>
<div class="c" style="left:922px;width:110px;top:747.0px">1</div>
<div class="c" style="left:1032px;width:245px;top:747.0px">100 (1级评分100 - 2级评分100)</div>
<div class="c" style="left:1277px;width:246px;top:747.0px">6688.88</div>
<div class="c" style="left:1767px;width:100px;top:747.0px;color:#c8ccd3">审批</div>
<div class="a" style="left:1556.0px;top:746.5px;width:41.7px;height:2px;background:#2a9a6e"></div>
<div class="a" style="left:1532.0px;top:735.5px;width:24px;height:24px"><svg class="a" style="left:0;top:0" width="24" height="24" viewBox="0 0 24 24"><circle cx="12" cy="12" r="11" stroke="#1fa85e" stroke-width="2" fill="#fff"/><path d="M7 12.3 L10.6 15.6 L17 9.2" stroke="#1fa85e" stroke-width="1.5" fill="none"/></svg></div>
<div class="t" style="left:1532.0px;top:761.0px;font-size:14px;color:#2db061">尹业进</div>
<div class="a" style="left:1621.7px;top:746.5px;width:41.7px;height:2px;background:#2a9a6e"></div>
<div class="a" style="left:1597.7px;top:735.5px;width:24px;height:24px"><svg class="a" style="left:0;top:0" width="24" height="24" viewBox="0 0 24 24"><circle cx="12" cy="12" r="11" stroke="#1fa85e" stroke-width="2" fill="#fff"/><path d="M7 12.3 L10.6 15.6 L17 9.2" stroke="#1fa85e" stroke-width="1.5" fill="none"/></svg></div>
<div class="t" style="left:1597.7px;top:761.0px;font-size:14px;color:#2db061">王慧鑫</div>
<div class="a" style="left:1687.3px;top:746.5px;width:41.7px;height:2px;background:#2a9a6e"></div>
<div class="a" style="left:1663.3px;top:735.5px;width:24px;height:24px"><svg class="a" style="left:0;top:0" width="24" height="24" viewBox="0 0 24 24"><circle cx="12" cy="12" r="11" stroke="#1fa85e" stroke-width="2" fill="#fff"/><path d="M7 12.3 L10.6 15.6 L17 9.2" stroke="#1fa85e" stroke-width="1.5" fill="none"/></svg></div>
<div class="t" style="left:1663.3px;top:761.0px;font-size:14px;color:#2db061">姬兵亮</div>
<div class="a" style="left:1729.0px;top:735.5px;width:24px;height:24px"><svg class="a" style="left:0;top:0" width="24" height="24" viewBox="0 0 24 24"><circle cx="12" cy="12" r="11" stroke="#1fa85e" stroke-width="2" fill="#fff"/><path d="M7 12.3 L10.6 15.6 L17 9.2" stroke="#1fa85e" stroke-width="1.5" fill="none"/></svg></div>
<div class="t" style="left:1729.0px;top:761.0px;font-size:14px;color:#2db061">李红</div>
<div class="red" style="left:656px;top:281px;width:93px;height:402px"></div>
<div class="red" style="left:851px;top:277px;width:84px;height:502.5px"></div>
<div class="red" style="left:598px;top:715px;width:165px;height:85px"></div>
<div class="red" style="left:1389px;top:282px;width:88px;height:498.5px"></div>
<div class="t" style="left:251px;top:867px;font-size:13px;color:#606266">共 8 条</div>
<div class="a" style="left:306px;top:864px;width:99px;height:28px;border:1px solid #dcdfe6;border-radius:3px"></div>
<div class="t" style="left:325px;top:868px;font-size:13px;color:#606266">10条/页</div>
<svg class="a" style="left:388px;top:874px" width="11" height="7" viewBox="0 0 11 7"><path d="M1 1 L5.5 5.5 L10 1" stroke="#c0c4cc" stroke-width="1" fill="none"/></svg>
<div class="a" style="left:426px;top:864px;width:30px;height:28px;background:#f4f4f5;border-radius:2px"></div>
<svg class="a" style="left:437px;top:872px" width="7" height="11" viewBox="0 0 7 11"><path d="M5.5 1 L1.5 5.5 L5.5 10" stroke="#b8bcc4" stroke-width="1.1" fill="none"/></svg>
<div class="a" style="left:466px;top:864px;width:30px;height:28px;background:#1890ff;border-radius:2px;color:#fff;font-size:13px;font-weight:bold;text-align:center;line-height:28px">1</div>
<div class="a" style="left:506px;top:864px;width:30px;height:28px;background:#f4f4f5;border-radius:2px"></div>
<svg class="a" style="left:518px;top:872px" width="7" height="11" viewBox="0 0 7 11"><path d="M1.5 1 L5.5 5.5 L1.5 10" stroke="#909399" stroke-width="1.1" fill="none"/></svg>
<div class="t" style="left:565px;top:868px;font-size:13px;color:#606266">前往</div>
<div class="a" style="left:595px;top:864px;width:46px;height:28px;border:1px solid #dcdfe6;border-radius:3px;text-align:center;line-height:26px;font-size:13px;color:#606266">1</div>
<div class="t" style="left:645px;top:868px;font-size:13px;color:#606266">页</div>
<div class="a" style="left:1903px;top:1px;width:16px;height:917px;background:#f1f1f1"></div>
<div class="a" style="left:1905px;top:17px;width:13px;height:860px;background:#c1c1c1"></div>
<svg class="a" style="left:1907px;top:6px" width="9" height="6" viewBox="0 0 9 6"><path d="M0.5 5 H8.5 L4.5 1 Z" fill="#a3a3a3"/></svg>
<svg class="a" style="left:1907px;top:907px" width="9" height="6" viewBox="0 0 9 6"><path d="M0.5 1 H8.5 L4.5 5 Z" fill="#505050"/></svg>
<div class="a" style="left:0;top:0;width:1920px;height:919px;border:1px solid rgba(0,0,0,.32);pointer-events:none"></div>
</body></html>
